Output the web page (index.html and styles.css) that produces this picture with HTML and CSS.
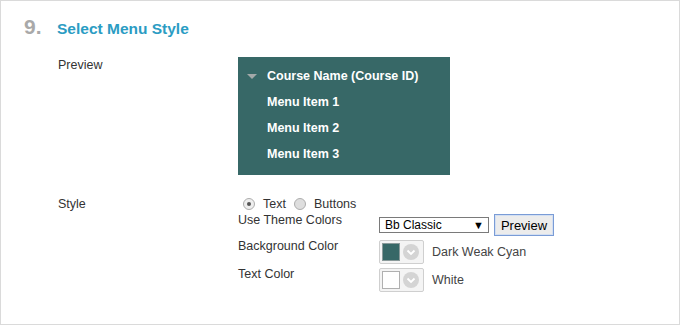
FILE: index.html
```html
<!DOCTYPE html>
<html lang="en">
<head>
    <meta charset="UTF-8">
    <title>Select Menu Style</title>
    <link rel="stylesheet" href="styles.css">
</head>
<body>

    <div class="panel">

        <h2 class="step-title">
            <span class="step-num">9.</span>
            <span class="step-name">Select Menu Style</span>
        </h2>

        <div class="field field-preview">
            <div class="field-label">Preview</div>
            <div class="menu-preview">
                <div class="menu-title"><span class="menu-arrow"></span>Course Name (Course ID)</div>
                <div class="menu-item">Menu Item 1</div>
                <div class="menu-item">Menu Item 2</div>
                <div class="menu-item">Menu Item 3</div>
            </div>
        </div>

        <div class="field field-style">
            <div class="field-label">Style</div>
            <div>
                <div class="radios">
                    <span class="radio checked"></span><span class="radio-text">Text</span>
                    <span class="radio"></span><span class="radio-text">Buttons</span>
                </div>

                <div class="settings">
                    <div class="set-label">Use Theme Colors</div>
                    <div class="set-control">
                        <div class="select">Bb Classic<span class="select-arrow">▼</span></div>
                        <button class="btn-preview">Preview</button>
                    </div>

                    <div class="set-label">Background Color</div>
                    <div class="set-control">
                        <div class="swatch-btn">
                            <span class="swatch swatch-teal"></span>
                            <svg class="chevron" width="16" height="16" viewBox="0 0 16 16">
                                <circle cx="8" cy="8" r="8" fill="#d4d4d4"/>
                                <polyline points="4.5,6.5 8,10 11.5,6.5" fill="none" stroke="#fff" stroke-width="1.8"/>
                            </svg>
                        </div>
                        <span class="swatch-name">Dark Weak Cyan</span>
                    </div>

                    <div class="set-label">Text Color</div>
                    <div class="set-control">
                        <div class="swatch-btn">
                            <span class="swatch swatch-white"></span>
                            <svg class="chevron" width="16" height="16" viewBox="0 0 16 16">
                                <circle cx="8" cy="8" r="8" fill="#d4d4d4"/>
                                <polyline points="4.5,6.5 8,10 11.5,6.5" fill="none" stroke="#fff" stroke-width="1.8"/>
                            </svg>
                        </div>
                        <span class="swatch-name">White</span>
                    </div>
                </div>
            </div>
        </div>

    </div>

</body>
</html>
```

FILE: styles.css
```css
body {
    margin: 0;
    font-family: "Liberation Sans", Arial, sans-serif;
    font-size: 12.5px;
    color: #333;
    background: #fff;
}

.panel {
    width: 680px;
    height: 325px;
    box-sizing: border-box;
    border: 1px solid #dadada;
    padding-top: 14px;
}

.step-title {
    display: flex;
    align-items: baseline;
    margin: 0 0 16px 23px;
    line-height: 24px;
    font-weight: bold;
}

    .step-num {
        width: 33px;
        font-size: 21px;
        color: #a9a9a9;
    }

    .step-name {
        font-size: 15.5px;
        color: #2b9cc3;
    }

.field {
    display: grid;
    grid-template-columns: 180px 1fr;
    margin-left: 57px;
    align-items: start;
}

.field-label {
    line-height: 16px;
}

.field-style {
    margin-top: 21px;
}

/* menu preview box */
.menu-preview {
    width: 212px;
    height: 118px;
    box-sizing: border-box;
    padding: 6px 0 8px 9px;
    background: #376867;
    color: #fff;
    font-weight: bold;
    line-height: 26px;
}

.menu-title {
    display: flex;
    align-items: center;
}

.menu-arrow {
    width: 0;
    height: 0;
    margin-right: 10px;
    border-left: 5px solid transparent;
    border-right: 5px solid transparent;
    border-top: 5px solid #a3a9a9;
}

.menu-item {
    padding-left: 20px;
}

/* style radios */
.radios {
    display: flex;
    align-items: center;
    height: 16px;
    padding-left: 5px;
}

.radio {
    width: 10px;
    height: 10px;
    border: 1px solid #adadad;
    border-radius: 50%;
    background: #dedede;
    margin-right: 8px;
    position: relative;
}

    .radio.checked {
        background: #eeeeee;
    }

        .radio.checked::after {
            content: "";
            position: absolute;
            left: 3px;
            top: 3px;
            width: 4px;
            height: 4px;
            border-radius: 50%;
            background: #555;
        }

.radio-text {
    margin-right: 8px;
}

.settings {
    display: grid;
    grid-template-columns: 141px auto;
    row-gap: 4px;
    margin-top: 2px;
    align-items: center;
}

.set-label {
    align-self: start;
    line-height: 12px;
}

.set-control {
    display: flex;
    align-items: center;
}

.select {
    display: flex;
    align-items: center;
    justify-content: space-between;
    width: 110px;
    height: 16px;
    box-sizing: border-box;
    border: 1px solid #7a7a7a;
    padding: 0 4px 0 5px;
    font-size: 12px;
    color: #000;
    background: #fff;
}

.select-arrow {
    font-size: 11px;
}

.btn-preview {
    margin-left: 5px;
    width: 60px;
    height: 22px;
    padding: 0;
    border: 1px solid #7a9cd6;
    box-shadow: inset 0 0 0 1px #d3dff2;
    background: #ececec;
    font-family: inherit;
    font-size: 13px;
    color: #000;
}

.swatch-btn {
    display: flex;
    align-items: center;
    width: 45px;
    height: 24px;
    box-sizing: border-box;
    border: 1px solid #cfcfcf;
    border-radius: 2px;
    padding: 2px 4px 2px 2px;
    background: #f4f4f4;
}

.swatch {
    width: 18px;
    height: 18px;
    box-sizing: border-box;
    border: 1px solid #b0b0b0;
    margin-right: 3px;
}

.swatch-teal {
    background: #376867;
    border-color: #8a9a9a;
}

.swatch-white {
    background: #fff;
}

.swatch-name {
    margin-left: 8px;
    line-height: 16px;
    color: #444;
}
```
